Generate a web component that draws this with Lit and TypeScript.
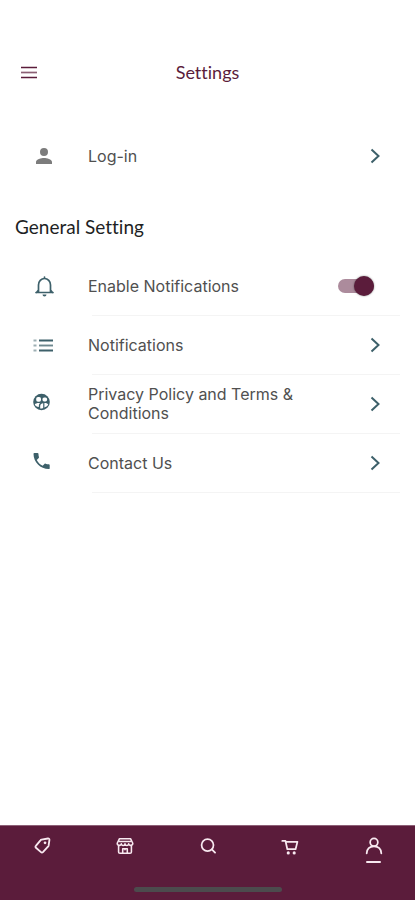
import { LitElement, html, css, svg, TemplateResult } from "lit";
import { customElement, state } from "lit/decorators.js";

const stroke = (body: TemplateResult, width = 24) => html`
  <svg width="${width}" height="24" viewBox="0 0 24 24" fill="none" stroke="currentColor"
    stroke-linecap="round" stroke-linejoin="round" aria-hidden="true">${body}</svg>`;

const icons = {
  menu: stroke(svg`<path d="M4 7.500h16M4 17.500h16" stroke-width="1.700" stroke-linecap="butt"/><path d="M4 12.500h16" stroke-width="1.700" stroke-linecap="butt" opacity=".7"/>`),
  person: stroke(svg`<path d="M12 12a4 4 0 1 0 0-8 4 4 0 0 0 0 8zm0 2c-2.700 0-8 1.340-8 4v2h16v-2c0-2.660-5.300-4-8-4z" fill="currentColor" stroke="none"/>`),
  bell: stroke(svg`<path d="M4 18.500h17M6.500 18v-7a6 6.500 0 0 1 12 0v7M4.500 18.500l2-2.500M20.500 18.500l-2-2.500M12.500 4.500v-1.500" stroke-width="1.700"/><path d="M10.500 20.500h4a2 2 0 0 1-4 0z" fill="currentColor" stroke="none"/>`),
  list: stroke(svg`<g stroke-width="1.900" stroke-linecap="butt"><path d="M7 7.500h14M7 17.500h14"/><path d="M7 12.500h14" opacity=".75"/><path d="M1.500 7.500h3M1.500 12.500h3M1.500 17.500h3" opacity=".5"/></g>`),
  group: stroke(svg`<circle cx="9.500" cy="10" r="8.300" fill="currentColor" stroke="none"/><g fill="#fff" stroke="none"><rect x="4.200" y="5" width="4.800" height="4.800" rx="1.800"/><rect x="10.500" y="5.400" width="4.600" height="4" rx="1.600"/><path d="M2.800 12.600c.6-1.200 2.600-1.700 5.200-1.500-.9.800-1.200 2-1.200 4-1.800-.2-3.500-1-4-2.500z"/><path d="M8.200 16.500v-2.700c.2-1.800 2-2.700 4.300-2.700 2 0 3.500.7 3.700 1.700-.7 1.200-1.800 1.900-3 2.200-1 .8-2.500 1.500-5 1.500z"/></g><path d="M11.800 11v5.500" stroke-width="1.200"/>`),
  phone: stroke(svg`<path transform="translate(-1.200 -.8) scale(.9)" d="M6.620 10.790c1.440 2.830 3.760 5.140 6.590 6.590l2.200-2.200c.27-.27.67-.36 1.020-.24 1.120.37 2.330.57 3.570.57.55 0 1 .45 1 1V20c0 .55-.45 1-1 1-9.390 0-17-7.610-17-17 0-.55.45-1 1-1h3.500c.55 0 1 .45 1 1 0 1.250.2 2.450.57 3.570.11.35.03.74-.25 1.020l-2.200 2.200z" fill="currentColor" stroke="none"/>`),
  chevron: stroke(svg`<path d="M8.500 5.500l7 6.500-7 6.500" stroke-width="2" stroke-linecap="butt" stroke-linejoin="miter"/>`),
  tag: stroke(svg`<path d="M11.500 5l7-1.200c1-.1 1.700.6 1.600 1.600l-.9 6.200c-.1.500-.3.900-.7 1.200l-5.500 5.900c-.6.600-1.500.6-2.100 0l-5.500-4.800c-.7-.6-.7-1.500-.1-2.100l5-6c.3-.4.700-.7 1.200-.8z" stroke-width="2"/><circle cx="15.300" cy="8.500" r="1.500" fill="currentColor" stroke="none"/>`),
  shop: stroke(svg`<path d="M6 4h12l2.500 5c0 3-4.500 3-4.500.5 0 2.500-4 2.500-4 0 0 2.500-4 2.500-4 0C8 12 3.500 12 3.500 9zM5 12v6.500c0 .9.600 1.500 1.500 1.500h11c.9 0 1.500-.6 1.500-1.500V12M6 7h12M9.500 19.500v-4.500h5v4.500M12 15v1" stroke-width="1.700"/>`),
  search: stroke(svg`<circle cx="11.500" cy="11" r="6.500" stroke-width="1.900"/><path d="M16.200 15.700l3.500 3.500" stroke-width="2"/>`),
  cart: stroke(svg`<path d="M2.500 6.500h3.500l2 9h9l2-8H6.300" stroke-width="1.900"/><circle cx="9" cy="19.500" r="1.700" fill="currentColor" stroke="none"/><circle cx="15.500" cy="19.500" r="1.700" fill="currentColor" stroke="none"/>`),
  account: stroke(svg`<circle cx="12" cy="8" r="4.200" stroke-width="1.900"/><path d="M4 20c.3-4.500 3-7.500 8-7.500s7.700 3 8 7.500" stroke-width="1.900"/>`),
};

const links = [
  { label: "Notifications", icon: icons.list },
  { label: "Privacy Policy and Terms & Conditions", icon: icons.group },
  { label: "Contact Us", icon: icons.phone },
];

const tabs = [
  { label: "Offers", icon: icons.tag },
  { label: "Store", icon: icons.shop },
  { label: "Search", icon: icons.search },
  { label: "Cart", icon: icons.cart },
  { label: "Account", icon: icons.account },
];

@customElement("app-root")
export class AppRoot extends LitElement {
  @state() private enabled = true;

  static styles = css`
    :host {
      display: flex;
      flex-direction: column;
      min-height: 100vh;
      box-sizing: border-box;
      background: #fff;
      color: #505050;
      font: 16px/19px Inter, "Liberation Sans", sans-serif;
    }
    svg { display: block; flex: none; }
    .header {
      display: grid;
      grid-template-columns: 24px 1fr 24px;
      align-items: center;
      padding: 60px 17px 43px;
      color: #5b1c3b;
    }
    .menu {
      padding: 0;
      border: 0;
      background: none;
      color: inherit;
    }
    .title, .section {
      margin: 0;
      font-family: Lato, sans-serif;
      font-weight: 400;
      font-size: 18px;
      line-height: 24px;
      font-variant-ligatures: none;
    }
    .title { text-align: center; }
    .section {
      padding: 30px 15px 18px;
      color: #1e1f24;
      font-size: 19px;
    }
    .main { flex: 1; }
    .row {
      display: grid;
      grid-template-columns: 24px 1fr auto;
      align-items: center;
      column-gap: 32px;
      min-height: 58px;
      padding: 0 28px 0 32px;
      color: inherit;
      text-decoration: none;
    }
    .icon, .chevron { color: #3d606a; }
    .person { color: #7c7c7c; }
    .list { margin: 0; padding: 0; list-style: none; }
    .item::after {
      content: "";
      display: block;
      height: 1px;
      margin: 0 15px 0 92px;
      background: #f4f4f4;
    }
    .switch {
      appearance: none;
      display: flex;
      align-items: center;
      width: 36px;
      height: 14px;
      margin: 0;
      border-radius: 7px;
      background: #cccccc;
    }
    .switch::before {
      content: "";
      width: 20px;
      height: 20px;
      flex: none;
      border-radius: 50%;
      background: #fafafa;
      box-shadow: 0 0 2px rgba(0, 0, 0, 0.5);
    }
    .switch:checked {
      justify-content: flex-end;
      background: #ac8b9c;
    }
    .switch:checked::before { background: #5b1c3b; }
    .toggle { padding-right: 41px; }
    .footer {
      background: #5b1c3b;
      border-top: 1px solid #8d6077;
      color: #f8e9f0;
    }
    .tabs { display: grid; grid-template-columns: repeat(5, 1fr); }
    .tab {
      display: flex;
      flex-direction: column;
      align-items: center;
      gap: 3px;
      height: 52px;
      padding-top: 8px;
      box-sizing: border-box;
      color: inherit;
    }
    .tab svg { width: 22px; }
    .active::after {
      content: "";
      width: 15px;
      height: 2px;
      border-radius: 1px;
      background: currentColor;
    }
    .home {
      width: 148px;
      height: 5px;
      margin: 9px auto 8px;
      border-radius: 3px;
      background: #4c4b4d;
    }
  `;

  render() {
    return html`
      <header class="header">
        <button class="menu" aria-label="Menu">${icons.menu}</button>
        <h1 class="title">Settings</h1>
      </header>
      <main class="main">
        <a class="row" href="#">
          <span class="person">${icons.person}</span>
          <span>Log-in</span>
          <span class="chevron">${icons.chevron}</span>
        </a>
        <h2 class="section">General Setting</h2>
        <ul class="list">
          <li class="item">
            <label class="row toggle">
              <span class="icon">${icons.bell}</span>
              <span>Enable Notifications</span>
              <input class="switch" type="checkbox" role="switch" .checked=${this.enabled}
                @change=${(e: Event) => (this.enabled = (e.target as HTMLInputElement).checked)} />
            </label>
          </li>
          ${links.map(
            (l) => html`<li class="item">
              <a class="row" href="#">
                <span class="icon">${l.icon}</span>
                <span>${l.label}</span>
                <span class="chevron">${icons.chevron}</span>
              </a>
            </li>`
          )}
        </ul>
      </main>
      <footer class="footer">
        <nav class="tabs">
          ${tabs.map(
            (t, i) => html`<a class="tab ${i === 4 ? "active" : ""}" href="#" aria-label=${t.label}>${t.icon}</a>`
          )}
        </nav>
        <div class="home"></div>
      </footer>
    `;
  }
}
